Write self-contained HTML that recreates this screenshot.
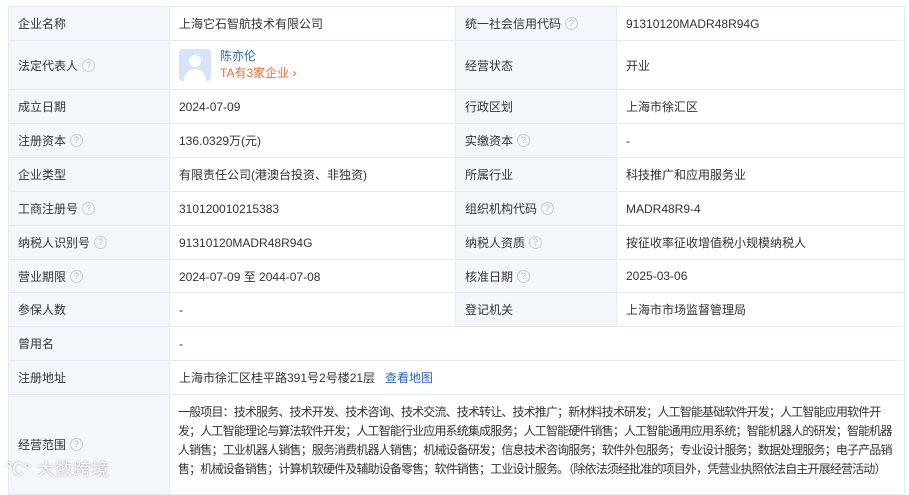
<!DOCTYPE html>
<html><head><meta charset="utf-8"><style>
body{margin:0;background:#fff;width:909px;height:483px;overflow:hidden;font-family:"Liberation Sans","Noto Sans CJK SC",sans-serif;font-size:12px;color:#333}
table{position:absolute;left:8px;top:6px;border-collapse:collapse;table-layout:fixed;width:896px}
td{border:1px solid #e4ebf5;padding:0 0 0 9px;vertical-align:middle;white-space:nowrap;overflow:hidden}
td.l{background:#f3f7fc;}
.q{display:inline-block;width:11px;height:11px;border:1px solid #ccc;border-radius:50%;color:#bbb;font-size:9px;line-height:11px;text-align:center;margin-left:4px;vertical-align:middle;margin-top:-2px}
a{color:#2b64c8;text-decoration:none}
.scope{line-height:19px;padding:8px 0 3px 8px;vertical-align:top;font-size:12px;letter-spacing:-0.85px}
.scope div{width:720px;overflow:hidden}
</style></head><body>
<table>
<colgroup><col style="width:161px"><col style="width:286px"><col style="width:161px"><col style="width:288px"></colgroup>
<tr style="height:34px"><td class="l">企业名称</td><td>上海它石智航技术有限公司</td><td class="l">统一社会信用代码<span class="q">?</span></td><td>91310120MADR48R94G</td></tr>
<tr style="height:49px"><td class="l">法定代表人<span class="q">?</span></td><td><div style="display:flex;align-items:center"><div style="width:32px;height:32px;background:#d5e3fb;border-radius:4px;position:relative;overflow:hidden;margin-right:9px;flex:none"><div style="position:absolute;left:10px;top:6px;width:12px;height:12px;border-radius:50%;background:#fff"></div><div style="position:absolute;left:5px;top:20px;width:22px;height:16px;border-radius:11px 11px 0 0;background:#fff"></div></div><div><div style="color:#2b64c8;line-height:17px">陈亦伦</div><div style="color:#f06b34;line-height:17px">TA有3家企业 ›</div></div></div></td><td class="l">经营状态</td><td>开业</td></tr>
<tr style="height:34px"><td class="l">成立日期</td><td>2024-07-09</td><td class="l">行政区划</td><td>上海市徐汇区</td></tr>
<tr style="height:34px"><td class="l">注册资本<span class="q">?</span></td><td>136.0329万(元)</td><td class="l">实缴资本<span class="q">?</span></td><td>-</td></tr>
<tr style="height:34px"><td class="l">企业类型</td><td>有限责任公司(港澳台投资、非独资)</td><td class="l">所属行业</td><td>科技推广和应用服务业</td></tr>
<tr style="height:34px"><td class="l">工商注册号<span class="q">?</span></td><td>310120010215383</td><td class="l">组织机构代码<span class="q">?</span></td><td>MADR48R9-4</td></tr>
<tr style="height:34px"><td class="l">纳税人识别号<span class="q">?</span></td><td>91310120MADR48R94G</td><td class="l">纳税人资质<span class="q">?</span></td><td>按征收率征收增值税小规模纳税人</td></tr>
<tr style="height:33px"><td class="l">营业期限<span class="q">?</span></td><td>2024-07-09 至 2044-07-08</td><td class="l">核准日期<span class="q">?</span></td><td>2025-03-06</td></tr>
<tr style="height:34px"><td class="l">参保人数</td><td>-</td><td class="l">登记机关</td><td>上海市市场监督管理局</td></tr>
<tr style="height:34px"><td class="l">曾用名</td><td colspan="3">-</td></tr>
<tr style="height:34px"><td class="l">注册地址</td><td colspan="3">上海市徐汇区桂平路391号2号楼21层 &nbsp;&nbsp;<a>查看地图</a></td></tr>
<tr style="height:100px"><td class="l">经营范围<span class="q">?</span></td><td colspan="3" class="scope"><div>一般项目：技术服务、技术开发、技术咨询、技术交流、技术转让、技术推广；新材料技术研发；人工智能基础软件开发；人工智能应用软件开<br>发；人工智能理论与算法软件开发；人工智能行业应用系统集成服务；人工智能硬件销售；人工智能通用应用系统；智能机器人的研发；智能机器<br>人销售；工业机器人销售；服务消费机器人销售；机械设备研发；信息技术咨询服务；软件外包服务；专业设计服务；数据处理服务；电子产品销<br>售；机械设备销售；计算机软硬件及辅助设备零售；软件销售；工业设计服务。（除依法须经批准的项目外，凭营业执照依法自主开展经营活动）</div></td></tr>
</table>
<div style="position:absolute;left:6px;top:455px;color:rgba(255,255,255,.9);font-size:17px;text-shadow:0 0 2px #999;letter-spacing:1px">℃° 大数跨境</div>
</body></html>
